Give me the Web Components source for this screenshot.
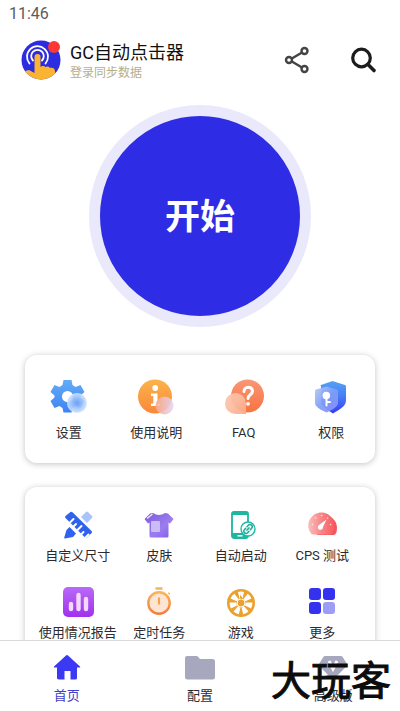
<!DOCTYPE html>
<html lang="zh-CN">
<head>
<meta charset="UTF-8">
<meta name="viewport" content="width=device-width, initial-scale=1">
<title>GC自动点击器</title>
<style>
  body {
    margin: 0;
    background: #fff;
    color: #2b2b2f;
    font-family: Roboto, "Noto Sans CJK SC", sans-serif;
  }
</style>
</head>
<body>

<app-shell>
  <status-bar slot="top">11:46</status-bar>

  <app-header slot="top">
    <svg slot="avatar" viewBox="0 0 40 40" width="40" height="40" aria-hidden="true">
      <defs><clipPath id="face"><circle cx="20" cy="20" r="19.5"/></clipPath></defs>
      <circle cx="20" cy="20" r="19.5" fill="#2c2ce0"/>
      <g fill="none" stroke="#fff" stroke-linecap="round">
        <path d="M8.500 23.500a10.500 10.500 0 1 1 16 0" stroke-width="1.800"/>
        <path d="M12 20.500a6.300 6.300 0 1 1 9 0" stroke-width="1.800"/>
      </g>
      <g clip-path="url(#face)">
        <path d="M13.500 17a3 3 0 0 1 6 0v10c1-1.500 4-1.500 5 0 1.500-1 4-.5 4.500 1 2-1 5 0 5 3l1 10H5L4 31l4-1 5.500 3z" fill="#fbb431"/>
      </g>
      <circle cx="33" cy="7" r="6" fill="#f93a34"/>
    </svg>
    GC自动点击器
    <a slot="sub" href="#login">登录同步数据</a>
    <button slot="actions" aria-label="分享">
      <svg viewBox="0 0 32 32" width="32" height="32" fill="none" stroke="#444" stroke-width="2.400">
        <path d="M10 15 21 8.500M10 17 21 23.500"/>
        <circle cx="8" cy="16" r="3"/><circle cx="23.500" cy="7" r="3"/><circle cx="23.500" cy="25" r="3"/>
      </svg>
    </button>
    <button slot="actions" aria-label="搜索">
      <svg viewBox="0 0 32 32" width="32" height="32" fill="none" stroke="#1c1c1c" stroke-width="3.200">
        <circle cx="14.500" cy="14" r="8.800"/>
        <path d="m21 20.500 6 6" stroke-width="3.600" stroke-linecap="round"/>
      </svg>
    </button>
  </app-header>

  <start-button>开始</start-button>

  <menu-card>
    <menu-item label="设置">
      <svg viewBox="0 0 36 36" width="36" height="36">
        <defs>
          <linearGradient id="gear" x1="0" y1="0" x2="0" y2="1"><stop stop-color="#62adf6"/><stop offset="1" stop-color="#3f82f3"/></linearGradient>
          <radialGradient id="gearDot"><stop stop-color="#6fa2f8"/><stop offset=".5" stop-color="#9cc2fb"/><stop offset="1" stop-color="#d3e2fe"/></radialGradient>
        </defs>
        <path fill="url(#gear)" fill-rule="evenodd" d="M12.500 2h8l1 5 3 2 5-2 4 7-4 3.500v2l4 3.500-4 7-5-2-3 2-1 4.500h-8l-1-4.500-3-2-5 2-4-7 4-3.500v-2l-4-3.500 4-7 5 2 3-2zM16.500 13a5.500 5.500 0 1 0 0 11 5.500 5.500 0 0 0 0-11z"/>
        <circle cx="26" cy="25" r="10" fill="url(#gearDot)" opacity=".92"/>
      </svg>
    </menu-item>
    <menu-item label="使用说明">
      <svg viewBox="0 0 36 36" width="36" height="36">
        <defs>
          <linearGradient id="info" x1="0" y1="0" x2="0" y2="1"><stop stop-color="#fbb34b"/><stop offset="1" stop-color="#fa873b"/></linearGradient>
          <linearGradient id="infoDot" x1="0" y1="0" x2="1" y2="0"><stop stop-color="#f7ad91"/><stop offset="1" stop-color="#e3d5f6"/></linearGradient>
        </defs>
        <circle cx="17" cy="18.500" r="17" fill="url(#info)"/>
        <circle cx="17.200" cy="10" r="2.900" fill="#fff"/>
        <path d="M13 15.500h6.500v10H22v2.500h-9v-2.500h2.300v-7.500H13z" fill="#fff"/>
        <circle cx="26.500" cy="27.500" r="9" fill="url(#infoDot)" opacity=".88"/>
      </svg>
    </menu-item>
    <menu-item label="FAQ">
      <svg viewBox="0 0 36 36" width="36" height="36">
        <defs>
          <linearGradient id="faq" x1="0" y1="0" x2="0" y2="1"><stop stop-color="#fa9676"/><stop offset="1" stop-color="#f87341"/></linearGradient>
          <linearGradient id="faqDot" x1="0" y1="0" x2="1" y2="1"><stop stop-color="#fcc5ad"/><stop offset=".5" stop-color="#fbbda2"/><stop offset="1" stop-color="#fca985"/></linearGradient>
        </defs>
        <circle cx="21.500" cy="18" r="16.500" fill="url(#faq)"/>
        <path d="M-1 25.500a10.500 10.500 0 0 1 21 0V36H9.500A10.500 10.500 0 0 1-1 25.500z" fill="url(#faqDot)" opacity=".93"/>
        <path d="M18 13.500c0-5.500 8.500-5.500 8.500-.5 0 4-4.500 3.500-4.500 7.500" fill="none" stroke="#fff" stroke-width="3" stroke-linecap="round"/>
        <circle cx="22" cy="25.800" r="1.900" fill="#fff"/>
      </svg>
    </menu-item>
    <menu-item label="权限">
      <svg viewBox="0 0 36 36" width="36" height="36">
        <defs>
          <linearGradient id="shield" x1="0" y1="0" x2="0" y2="1"><stop stop-color="#55a1f5"/><stop offset=".5" stop-color="#477bf5"/><stop offset="1" stop-color="#353cf2"/></linearGradient>
          <linearGradient id="shieldFront" x1="0" y1="0" x2="1" y2="1"><stop stop-color="#b4c9f9"/><stop offset=".5" stop-color="#7e9cf7"/><stop offset="1" stop-color="#8d91fa"/></linearGradient>
        </defs>
        <path d="M19.500 3 32 7q1 .3 1 1.500v14c0 6-7 9-13 13-6-4-12-7-12-13v-14Q7 7.300 8 7z" fill="url(#shield)"/>
        <path d="M13.500 8.500 24 11.500q1 .3 1 1.500v12c0 4-6 7-11.500 9.500C8 32 2 29 2 25V13q0-1.200 1-1.500z" fill="url(#shieldFront)" opacity=".93"/>
        <circle cx="13.300" cy="17.500" r="3.800" fill="#fff"/>
        <path d="M13.500 20v7.500M14 24h3" stroke="#fff" stroke-width="2" stroke-linecap="round"/>
      </svg>
    </menu-item>
  </menu-card>

  <menu-card dense>
    <menu-item label="自定义尺寸">
      <svg viewBox="0 0 32 32" width="32" height="32">
        <path d="M19 8l5-5q1-1 2 0l4 4q1 1 0 2l-5 5z" fill="#a9c3fb"/>
        <path d="M7.500 18 14 24.500 11 28l-8 1.500q-1 0-.7-1.200L4.500 21z" fill="#2f62ed"/>
        <path d="M3.500 7 8.500 3q1-.6 2 .3L29.500 22q1 1 .2 2L25 28.500q-1 1-2 0L3.500 9q-1-1 0-2z" fill="#2f62ed"/>
        <path d="m8 13.500 3.500-3.500m.5 7 2-2m1.500 6 4-4m0 8 2-2m2 5.500 3-3" stroke="#fff" stroke-width="2" stroke-linecap="round"/>
      </svg>
    </menu-item>
    <menu-item label="皮肤">
      <svg viewBox="0 0 32 32" width="32" height="32">
        <defs><linearGradient id="shirt" x1="0" y1="0" x2="1" y2="1"><stop stop-color="#7c5bd9"/><stop offset=".6" stop-color="#9c7cf0"/><stop offset="1" stop-color="#8159ea"/></linearGradient></defs>
        <path d="M10 4q6 4 12 0l3 .5L30.500 10 27 14.500l-1.500-1V27q0 1.500-1.500 1.500H8Q6.500 28.500 6.500 27V13.500l-1.500 1L1.500 10 7 4.500z" fill="url(#shirt)"/>
        <path d="M4 9.500 9.500 5" stroke="#ece4ff" stroke-width="1.600"/>
        <rect x="8" y="12" width="9" height="11" rx="1" fill="#cbbbf7"/>
      </svg>
    </menu-item>
    <menu-item label="自动启动">
      <svg viewBox="0 0 32 32" width="32" height="32">
        <rect x="7" y="3" width="16" height="26" rx="2.500" fill="#fff" stroke="#1fb6a1" stroke-width="1.800"/>
        <path d="M6.500 4q0-1.500 2-1.500h13q2 0 2 1.500v2h-17zM6.500 24h17v3q0 2-2 2h-13q-2 0-2-2z" fill="#1fb6a1"/>
        <path d="M12.500 26.800h5" stroke="#fff" stroke-width="1.500"/>
        <circle cx="23" cy="20" r="7" fill="#f4fffc" stroke="#22b8a4" stroke-width="1.400"/>
        <g transform="rotate(-48 23 20)" fill="none" stroke="#22a997" stroke-width="1.500" stroke-linecap="round">
          <path d="M22 17.800h-2a2.200 2.200 0 0 0 0 4.400h2M24 17.800h2a2.200 2.200 0 0 1 0 4.400h-2M21.500 20h3"/>
        </g>
      </svg>
    </menu-item>
    <menu-item label="CPS 测试">
      <svg viewBox="0 0 32 32" width="32" height="32">
        <defs><linearGradient id="gauge" x1="0" y1="0" x2="1" y2="0"><stop stop-color="#fbbcbc"/><stop offset=".5" stop-color="#f88689"/><stop offset="1" stop-color="#f75c62"/></linearGradient></defs>
        <path d="M10 10c10-8 21-1 21 9q0 4-1.500 6-.7 1-2.500 1H11z" fill="#f4565c"/>
        <path d="M5 24.500C-2 14 6 3.500 15.500 3.500S32 14 26 24.500q-.5 1-2 1H7q-1.300 0-2-1z" fill="url(#gauge)"/>
        <path d="M6.500 15.500h.1M9.500 9h.1M15.500 6.500h.1M21.500 9h.1M24.500 15.500h.1" stroke="#fff" stroke-opacity=".7" stroke-width="1.600" stroke-linecap="round"/>
        <path d="M20.500 10.500 17 18a2.600 2.600 0 1 1-4-2z" fill="#fff"/>
      </svg>
    </menu-item>
    <menu-item label="使用情况报告">
      <svg viewBox="0 0 32 32" width="32" height="32">
        <defs><linearGradient id="report" x1="0" y1="0" x2="0" y2="1"><stop stop-color="#b86af8"/><stop offset="1" stop-color="#a031ed"/></linearGradient></defs>
        <rect x="1" y="1" width="31" height="30" rx="5" fill="url(#report)"/>
        <path d="M9 18v5M16.500 9v14M24 13v10" stroke="#f4d8ff" stroke-width="4.400" stroke-linecap="round"/>
      </svg>
    </menu-item>
    <menu-item label="定时任务">
      <svg viewBox="0 0 32 32" width="32" height="32">
        <defs><linearGradient id="timer" x1="0" y1="0" x2="0" y2="1"><stop stop-color="#f9b558"/><stop offset="1" stop-color="#f67c3d"/></linearGradient></defs>
        <path d="M12.500 2.500h7M25.500 8l1-1" stroke="#f8b35a" stroke-width="2.400"/>
        <circle cx="16" cy="17" r="10.700" fill="#fce5d2" stroke="url(#timer)" stroke-width="2.400"/>
        <path d="M16 11.500v7" stroke="#f6a34e" stroke-width="2.200"/>
      </svg>
    </menu-item>
    <menu-item label="游戏">
      <svg viewBox="0 0 32 32" width="32" height="32">
        <circle cx="16" cy="17" r="14" fill="#eba12f"/>
        <g fill="#fff">
          <path id="blade" d="M14.500 12.500 13 6q3-.9 6 0l-1.500 6.500z"/>
          <use href="#blade" transform="rotate(51 16 17)"/>
          <use href="#blade" transform="rotate(103 16 17)"/>
          <use href="#blade" transform="rotate(154 16 17)"/>
          <use href="#blade" transform="rotate(206 16 17)"/>
          <use href="#blade" transform="rotate(257 16 17)"/>
          <use href="#blade" transform="rotate(309 16 17)"/>
        </g>
        <circle cx="16" cy="17" r="4" fill="#eba12f" stroke="#fff" stroke-width="1"/>
        <path d="M16 14q-2-3-.5-6 0 2 1.500 3 1 2-1 3z" fill="#eba12f"/>
      </svg>
    </menu-item>
    <menu-item label="更多">
      <svg viewBox="0 0 32 32" width="32" height="32" fill="#3432ef">
        <rect x="3" y="2" width="12" height="12" rx="3"/>
        <rect x="17" y="2" width="12" height="12" rx="3"/>
        <rect x="3" y="16" width="12" height="12" rx="3"/>
        <rect x="17" y="16" width="12" height="12" rx="3" fill="#9d9cf6"/>
      </svg>
    </menu-item>
  </menu-card>

  <tab-bar slot="bottom">
    <tab-item label="首页" active>
      <svg viewBox="0 0 32 32" width="32" height="32">
        <path d="M15 4.500q1-.9 2 0L29 15.500q.8 1-.5 1H26V27q0 1.500-1.500 1.500h-5V20h-6v8.500h-5Q6 28.500 6 27V16.500H3.500q-1.300 0-.5-1z" fill="#3b39f3"/>
      </svg>
    </tab-item>
    <tab-item label="配置">
      <svg viewBox="0 0 32 32" width="32" height="32">
        <path d="M3 5h9.500q1 0 1.600.8L16 8h12.500Q31 8 31 10.500V26q0 2.500-2.500 2.500h-25Q1 28.500 1 26V7q0-2 2-2z" fill="#a7a8be"/>
      </svg>
    </tab-item>
    <tab-item label="高级版">
      <svg viewBox="0 0 32 32" width="32" height="32">
        <path d="M8 5h16q1 0 1.500.8L30 13q.6 1-.2 2L17 28q-1 1-2 0L2.200 15q-.8-1-.2-2l4.500-7.200Q7 5 8 5z" fill="#a7a8be"/>
        <path d="m12 10 4 8 4-8" fill="none" stroke="#fff" stroke-width="2.800"/>
      </svg>
    </tab-item>
    <site-mark slot="mark">大玩客</site-mark>
  </tab-bar>
</app-shell>

<script>
class AppShell extends HTMLElement {
  connectedCallback() {
    this.attachShadow({ mode: 'open' });
    this.shadowRoot.innerHTML = `
      <style>
        :host {
          display: flex;
          flex-direction: column;
          height: 100vh;
        }
        main {
          flex: 1;
          min-height: 0;
          overflow-y: auto;
          scrollbar-width: none;
        }
        .content {
          display: flex;
          flex-direction: column;
          gap: 24px;
          padding: 13px 25px 24px;
        }
      </style>
      <slot name="top"></slot>
      <main><div class="content"><slot></slot></div></main>
      <slot name="bottom"></slot>
    `;
  }
}

class StatusBar extends HTMLElement {
  connectedCallback() {
    this.attachShadow({ mode: 'open' });
    this.shadowRoot.innerHTML = `
      <style>
        :host {
          display: block;
          padding: 0 9px;
          font-size: 16px;
          line-height: 28px;
          color: #5c5c5c;
        }
      </style>
      <slot></slot>
    `;
  }
}

class AppHeader extends HTMLElement {
  connectedCallback() {
    this.attachShadow({ mode: 'open' });
    this.shadowRoot.innerHTML = `
      <style>
        :host {
          display: block;
        }
        header {
          display: flex;
          align-items: center;
          gap: 9px;
          padding: 12px 21px;
        }
        .names {
          flex: 1;
        }
        h1 {
          margin: 0;
          font-size: 18px;
          font-weight: 400;
          line-height: 26px;
          color: #111;
        }
        .actions {
          display: flex;
          gap: 34px;
        }
        ::slotted(svg) {
          display: block;
        }
        ::slotted(a) {
          display: block;
          font-size: 12px;
          line-height: 14px;
          color: #b5ae8a;
          text-decoration: none;
        }
        ::slotted(button) {
          display: flex;
          padding: 0;
          border: 0;
          background: none;
          cursor: pointer;
        }
      </style>
      <header>
        <slot name="avatar"></slot>
        <div class="names">
          <h1><slot></slot></h1>
          <slot name="sub"></slot>
        </div>
        <div class="actions"><slot name="actions"></slot></div>
      </header>
    `;
  }
}

class StartButton extends HTMLElement {
  connectedCallback() {
    this.attachShadow({ mode: 'open' });
    this.shadowRoot.innerHTML = `
      <style>
        :host {
          display: flex;
          justify-content: center;
          padding-bottom: 4px;
        }
        button {
          box-sizing: border-box;
          width: 222px;
          height: 222px;
          padding: 0 0 6px;
          border: 11px solid #eae8fb;
          border-radius: 50%;
          background: #2e2ce4;
          color: #fff;
          font-family: inherit;
          font-size: 35px;
          font-weight: 700;
          cursor: pointer;
        }
      </style>
      <button><slot></slot></button>
    `;
  }
}

class MenuCard extends HTMLElement {
  connectedCallback() {
    this.attachShadow({ mode: 'open' });
    this.shadowRoot.innerHTML = `
      <style>
        :host {
          display: grid;
          grid-template-columns: repeat(4, 1fr);
          row-gap: 20px;
          padding: 23px 0 20px;
          border-radius: 12px;
          background: #fff;
          box-shadow: 0 1px 6px rgba(0, 0, 0, 0.24);
          --item-gap: 9px;
        }
        :host([dense]) {
          padding: 22px 12px;
          --item-gap: 5px;
        }
      </style>
      <slot></slot>
    `;
  }
}

class MenuItem extends HTMLElement {
  connectedCallback() {
    this.attachShadow({ mode: 'open' });
    this.shadowRoot.innerHTML = `
      <style>
        :host {
          display: block;
        }
        button {
          display: flex;
          flex-direction: column;
          align-items: center;
          gap: var(--item-gap);
          width: 100%;
          padding: 0;
          border: 0;
          background: none;
          color: inherit;
          font-family: inherit;
          font-size: 13px;
          line-height: 20px;
          white-space: nowrap;
          cursor: pointer;
        }
        ::slotted(svg) {
          display: block;
          overflow: visible;
        }
      </style>
      <button>
        <slot></slot>
        <span>${this.getAttribute('label')}</span>
      </button>
    `;
  }
}

class TabBar extends HTMLElement {
  connectedCallback() {
    this.attachShadow({ mode: 'open' });
    this.shadowRoot.innerHTML = `
      <style>
        :host {
          display: block;
          position: relative;
          border-top: 1px solid #d9d9d9;
          background: #fff;
        }
        nav {
          display: grid;
          grid-template-columns: repeat(3, 1fr);
          padding: 10px 0 5px;
        }
      </style>
      <nav><slot></slot></nav>
      <slot name="mark"></slot>
    `;
  }
}

class TabItem extends HTMLElement {
  connectedCallback() {
    this.attachShadow({ mode: 'open' });
    this.shadowRoot.innerHTML = `
      <style>
        :host {
          display: block;
        }
        a {
          display: flex;
          flex-direction: column;
          align-items: center;
          gap: 3px;
          color: inherit;
          font-size: 13px;
          line-height: 20px;
          text-decoration: none;
        }
        :host([active]) a {
          color: #3f3dc8;
        }
        ::slotted(svg) {
          display: block;
        }
      </style>
      <a href="#${this.getAttribute('label')}">
        <slot></slot>
        <span>${this.getAttribute('label')}</span>
      </a>
    `;
  }
}

// Site name stamped over the corner of the tab bar
class SiteMark extends HTMLElement {
  connectedCallback() {
    this.attachShadow({ mode: 'open' });
    this.shadowRoot.innerHTML = `
      <style>
        :host {
          position: absolute;
          right: 9px;
          bottom: 9px;
          font-family: "Noto Sans CJK SC", sans-serif;
          font-size: 40px;
          font-weight: 400;
          line-height: 48px;
          color: #0c0c0c;
          -webkit-text-stroke: 1px #0c0c0c;
          pointer-events: none;
        }
      </style>
      <slot></slot>
    `;
  }
}

customElements.define('app-shell', AppShell);
customElements.define('status-bar', StatusBar);
customElements.define('app-header', AppHeader);
customElements.define('start-button', StartButton);
customElements.define('menu-card', MenuCard);
customElements.define('menu-item', MenuItem);
customElements.define('tab-bar', TabBar);
customElements.define('tab-item', TabItem);
customElements.define('site-mark', SiteMark);
</script>
</body>
</html>
